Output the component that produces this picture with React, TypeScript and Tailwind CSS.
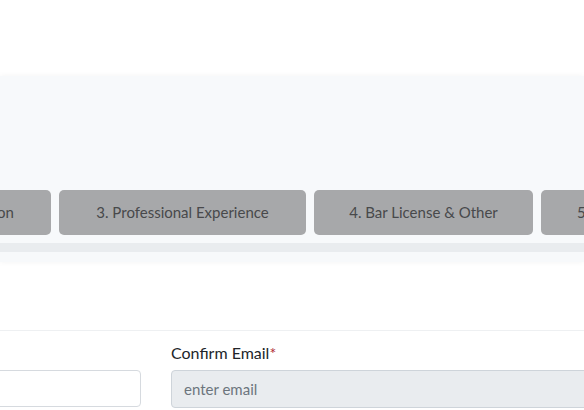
import React from 'react';

const steps = [
  { label: '2. Education', width: 'w-[156px] -ml-[105px]' },
  { label: '3. Professional Experience', width: 'w-[247px]' },
  { label: '4. Bar License & Other', width: 'w-[219px]' },
  { label: '5. Review & Submit', width: 'w-[200px]' },
];

export default function App() {
  return (
    <div className="w-[584px] h-[410px] overflow-hidden bg-white font-['Lato','Open_Sans',sans-serif]">
      {/* Top spacer */}
      <div className="h-[76px]" />

      {/* Steps panel */}
      <div className="bg-[#f7f9fb] shadow-[0_0_6px_rgba(0,0,0,0.05)] pt-[114px] pb-[10px]">
        <div className="flex gap-2 whitespace-nowrap">
          {steps.map((s) => (
            <button
              key={s.label}
              className={`${s.width} shrink-0 h-[45px] rounded-[5px] bg-[#a7a8aa] text-[#48494b] text-[15px] flex items-center justify-center`}
            >
              {s.label}
            </button>
          ))}
        </div>
        <div className="mt-2 h-[9px] bg-[#e9ecef]" />
      </div>

      {/* Form section */}
      <div className="mt-[68px] border-t border-[#eef0f2] pt-[12px]">
        <div className="flex gap-[30px] -ml-[200px]">
          <div className="w-[341px] shrink-0 pt-[27px]">
            <div className="h-[37px] rounded-[4px] border border-[#d6dadf] bg-white" />
          </div>
          <div className="w-[460px] shrink-0">
            <label className="block text-[16px] text-[#212529] mb-[7px] leading-[20px]">
              Confirm Email<span className="text-[#b02a37]">*</span>
            </label>
            <div className="h-[38px] rounded-[4px] border border-[#ced4da] bg-[#e9ecef] flex items-center px-3 text-[15px] text-[#6c757d]">
              enter email
            </div>
          </div>
        </div>
      </div>
    </div>
  );
}
